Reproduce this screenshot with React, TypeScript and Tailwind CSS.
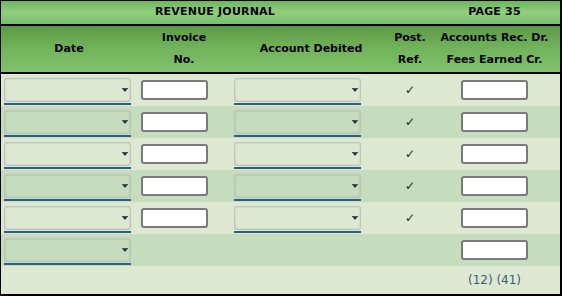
import React from 'react';

interface JournalRow {
  invoice: boolean;
  account: boolean;
  posted: boolean;
  amount: boolean;
}

const rows: JournalRow[] = [
  { invoice: true, account: true, posted: true, amount: true },
  { invoice: true, account: true, posted: true, amount: true },
  { invoice: true, account: true, posted: true, amount: true },
  { invoice: true, account: true, posted: true, amount: true },
  { invoice: true, account: true, posted: true, amount: true },
  { invoice: false, account: false, posted: false, amount: true },
];

const FakeSelect: React.FC = () => (
  <div className="flex flex-col w-[127px]">
    <div className="h-[24px] rounded-[3px] border border-[#c0c4bc] shadow-[inset_0_0_2px_rgba(0,0,0,0.2),0_0_1px_rgba(0,0,0,0.15)] flex items-center justify-end pr-[2px]">
      <svg width="6" height="4" viewBox="0 0 6 4">
        <rect x="0" y="0" width="6" height="1" fill="#5a4a55" />
        <polygon points="0.5,1 5.5,1 3,4" fill="#26324a" />
      </svg>
    </div>
    <div className="h-[2px] mt-[1px] bg-[#2b5f86]" />
  </div>
);

const TextBox: React.FC = () => (
  <div className="w-[67px] h-[20px] bg-white rounded-[3px] border-2 border-[#7a7a7a]" />
);

export default function App() {
  return (
    <div className="w-[562px] h-[296px] bg-[#dde8d1] font-['DejaVu_Sans',sans-serif] text-[11px] text-black">
      <div className="border-l border-t border-r-2 border-b-2 border-black h-full flex flex-col">
        {/* title bar */}
        <div className="grid grid-cols-[428px_1fr] h-[23px] font-bold bg-[linear-gradient(to_bottom,#6fb65e,#8fd07c_50%,#78be67)] items-center text-center tracking-[0.2px]">
          <div>REVENUE JOURNAL</div>
          <div>PAGE 35</div>
        </div>
        <div className="h-[2px] bg-black" />
        {/* column headers */}
        <div className="grid grid-cols-[136px_94px_160px_38px_1fr] h-[46px] font-bold leading-[22px] items-center text-center bg-[linear-gradient(to_bottom,#5b9a43,#70b25a_45%,#7fc36a)]">
          <div>Date</div>
          <div>Invoice<br />No.</div>
          <div>Account Debited</div>
          <div>Post.<br />Ref.</div>
          <div>Accounts Rec. Dr.<br />Fees Earned Cr.</div>
        </div>
        <div className="h-[2px] bg-black" />
        {/* entry rows */}
        {rows.map((row, i) => (
          <div
            key={i}
            className={`grid grid-cols-[136px_94px_160px_38px_1fr] h-[32px] items-center ${i % 2 === 0 ? 'bg-[#dde8d1]' : 'bg-[#c5dcbd]'}`}
          >
            <div className="pl-[3px] pt-[3px]"><FakeSelect /></div>
            <div className="pl-[4px]">{row.invoice && <TextBox />}</div>
            <div className="pl-[3px] pt-[3px]">{row.account && <FakeSelect />}</div>
            <div className="text-center text-[12px] text-[#222]">{row.posted && '✓'}</div>
            <div className="flex justify-center">{row.amount && <TextBox />}</div>
          </div>
        ))}
        {/* totals */}
        <div className="grid grid-cols-[428px_1fr] flex-1 items-center">
          <div />
          <div className="text-center text-[12px] text-[#33607f]">(12) (41)</div>
        </div>
      </div>
    </div>
  );
}
